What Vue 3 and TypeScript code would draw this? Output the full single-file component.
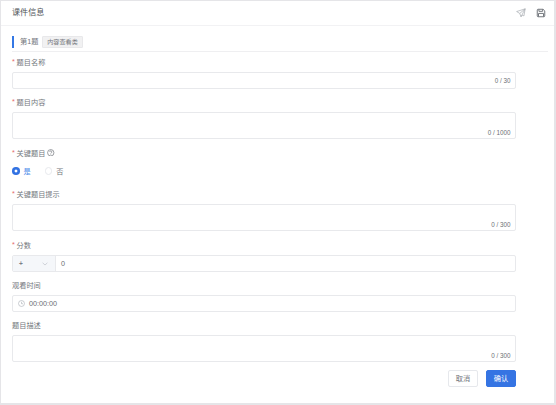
<script setup lang="ts">
import { ref } from 'vue'

const critical = ref(true)
const score = ref('0')
const watchTime = ref('00:00:00')
</script>

<template>
  <div class="page">
    <section class="panel">
      <header class="head">
        <h1>课件信息</h1>
        <div class="tools">
          <svg class="send" viewBox="0 0 24 24"><path d="M22 2 1.5 8.5 9 13l3 8 3-4 4 2zM9 13 22 2 12 21" /></svg>
          <svg class="save" viewBox="0 0 24 24"><path d="M3 5a2 2 0 0 1 2-2h12l4 4v12a2 2 0 0 1-2 2H5a2 2 0 0 1-2-2zM7 3v5h9V3M6 21v-8h12v8" /></svg>
        </div>
      </header>
      <main class="body">
        <div class="section">
          <i class="bar"></i>
          <span class="number">第1题</span>
          <span class="tag">内容查看类</span>
        </div>
        <form class="form" @submit.prevent>
          <div class="field single">
            <label class="required">题目名称</label>
            <div class="control"><span class="count">0 / 30</span></div>
          </div>
          <div class="field multi">
            <label class="required">题目内容</label>
            <div class="control area"><span class="count">0 / 1000</span></div>
          </div>
          <div class="field choice">
            <label class="required">关键题目
              <svg class="help" viewBox="0 0 16 16"><circle cx="8" cy="8" r="6.8" /><path d="M5.8 6.3a2.2 2.2 0 1 1 3.3 1.9C8.3 8.7 8 9 8 9.8M8 11.3v1.2" /></svg>
            </label>
            <div class="radios">
              <span class="radio" :class="{ on: critical }" @click="critical = true"><i></i>是</span>
              <span class="radio" :class="{ on: !critical }" @click="critical = false"><i></i>否</span>
            </div>
          </div>
          <div class="field hint">
            <label class="required">关键题目提示</label>
            <div class="control area"><span class="count">0 / 300</span></div>
          </div>
          <div class="field single">
            <label class="required">分数</label>
            <div class="control">
              <span class="prepend">
                <b>+</b>
                <svg viewBox="0 0 10 10"><path d="m1 3 4 3.7L9 3" /></svg>
              </span>
              <span class="score">{{ score }}</span>
            </div>
          </div>
          <div class="field single">
            <label>观看时间</label>
            <div class="control">
              <svg class="clock" viewBox="0 0 16 16"><circle cx="8" cy="8" r="6.8" /><path d="M8 4v4.5h3.5" /></svg>
              <span>{{ watchTime }}</span>
            </div>
          </div>
          <div class="field last">
            <label>题目描述</label>
            <div class="control area"><span class="count">0 / 300</span></div>
          </div>
          <div class="actions">
            <button type="button">取消</button>
            <button type="button" class="primary">确认</button>
          </div>
        </form>
      </main>
    </section>
  </div>
</template>

<style>
body {
  margin: 0;
  background: #e5e5e8;
}
</style>

<style scoped>
* {
  box-sizing: border-box;
}
.page {
  height: 405px;
  padding: 1px 2px 2px 1px;
  font-family: "Liberation Sans", "Noto Sans CJK SC", sans-serif;
  font-size: 7.2px;
  color: #74777d;
}
svg {
  fill: none;
  stroke: currentColor;
}
.panel {
  height: 402px;
  background: #fff;
}
.head {
  display: flex;
  justify-content: space-between;
  align-items: center;
  height: 25px;
  padding: 0 8px 0 11px;
  border-bottom: 1px solid #f2f2f4;
}
h1 {
  margin: 0;
  font-size: 8.1px;
  font-weight: 400;
  line-height: 12px;
  color: #505358;
}
.tools {
  display: flex;
  align-items: center;
  gap: 10px;
}
.tools svg {
  width: 10px;
  height: 10px;
}
.send {
  color: #a9adb3;
  stroke-width: 1.7;
}
.save {
  color: #74787e;
  stroke-width: 2.4;
}
.body {
  padding: 7px 6px 0 11px;
}
.section {
  display: flex;
  align-items: center;
  height: 19px;
  padding-bottom: 1px;
  border-bottom: 1px solid #efeff1;
}
.bar {
  width: 2px;
  height: 12px;
  background: #3478e5;
}
.number {
  width: 22px;
  margin-left: 6px;
  line-height: 12px;
  white-space: nowrap;
}
.tag {
  display: flex;
  align-items: center;
  justify-content: center;
  width: 41px;
  height: 12px;
  border: 1px solid #e8e8ea;
  border-radius: 1px;
  background: #f1f1f2;
  font-size: 6.1px;
  white-space: nowrap;
}
.form {
  width: 504px;
}
.single {
  height: 40px;
}
.multi {
  height: 51px;
}
.choice {
  height: 41px;
}
.hint {
  height: 51px;
}
.last {
  height: 47px;
}
label {
  display: flex;
  align-items: center;
  height: 20px;
  padding-bottom: 1px;
}
.required::before {
  content: "*";
  width: 4.6px;
  color: #e46a6a;
}
.help {
  width: 7.5px;
  height: 7.5px;
  margin-left: 2px;
  stroke-width: 1.5;
}
.control {
  display: flex;
  align-items: center;
  height: 17px;
  border: 1px solid #e8e9ec;
  border-radius: 2px;
  color: #6c6f74;
}
.area {
  height: 27px;
  align-items: flex-end;
}
.count {
  margin-left: auto;
  padding-right: 4.5px;
  font-size: 6.3px;
  line-height: 10px;
}
.radios {
  display: flex;
  align-items: center;
  gap: 14px;
  height: 16px;
}
.radio {
  display: flex;
  align-items: center;
  gap: 4px;
}
.radio i {
  width: 7.5px;
  height: 7.5px;
  border: 1px solid #e7e9ed;
  border-radius: 50%;
}
.radio.on {
  color: #4b88e9;
}
.radio.on i {
  border: none;
  background: radial-gradient(circle, #fff 1px, #3272e2 1.8px);
}
.prepend {
  display: flex;
  align-items: center;
  justify-content: space-between;
  width: 43px;
  height: 15px;
  padding: 0 7px 0 6px;
  border-right: 1px solid #e8e9ec;
  background: #f5f7fa;
}
.prepend b {
  font-size: 6.5px;
  color: #7c8086;
}
.prepend svg {
  width: 6px;
  height: 6px;
  color: #b5b9c1;
}
.score {
  margin-left: 5px;
}
.clock {
  width: 7px;
  height: 7px;
  margin: 0 4px 0 5px;
  color: #b0b4bb;
  stroke-width: 1.5;
}
.actions {
  display: flex;
  justify-content: flex-end;
  gap: 8px;
  padding-top: 8px;
}
button {
  width: 30px;
  height: 17px;
  padding: 0 0 1px;
  border: 1px solid #e6e8ec;
  border-radius: 2px;
  background: #fff;
  font: inherit;
  color: #74777d;
}
.primary {
  border-color: #3574e3;
  background: #3574e3;
  color: #fff;
}
</style>
